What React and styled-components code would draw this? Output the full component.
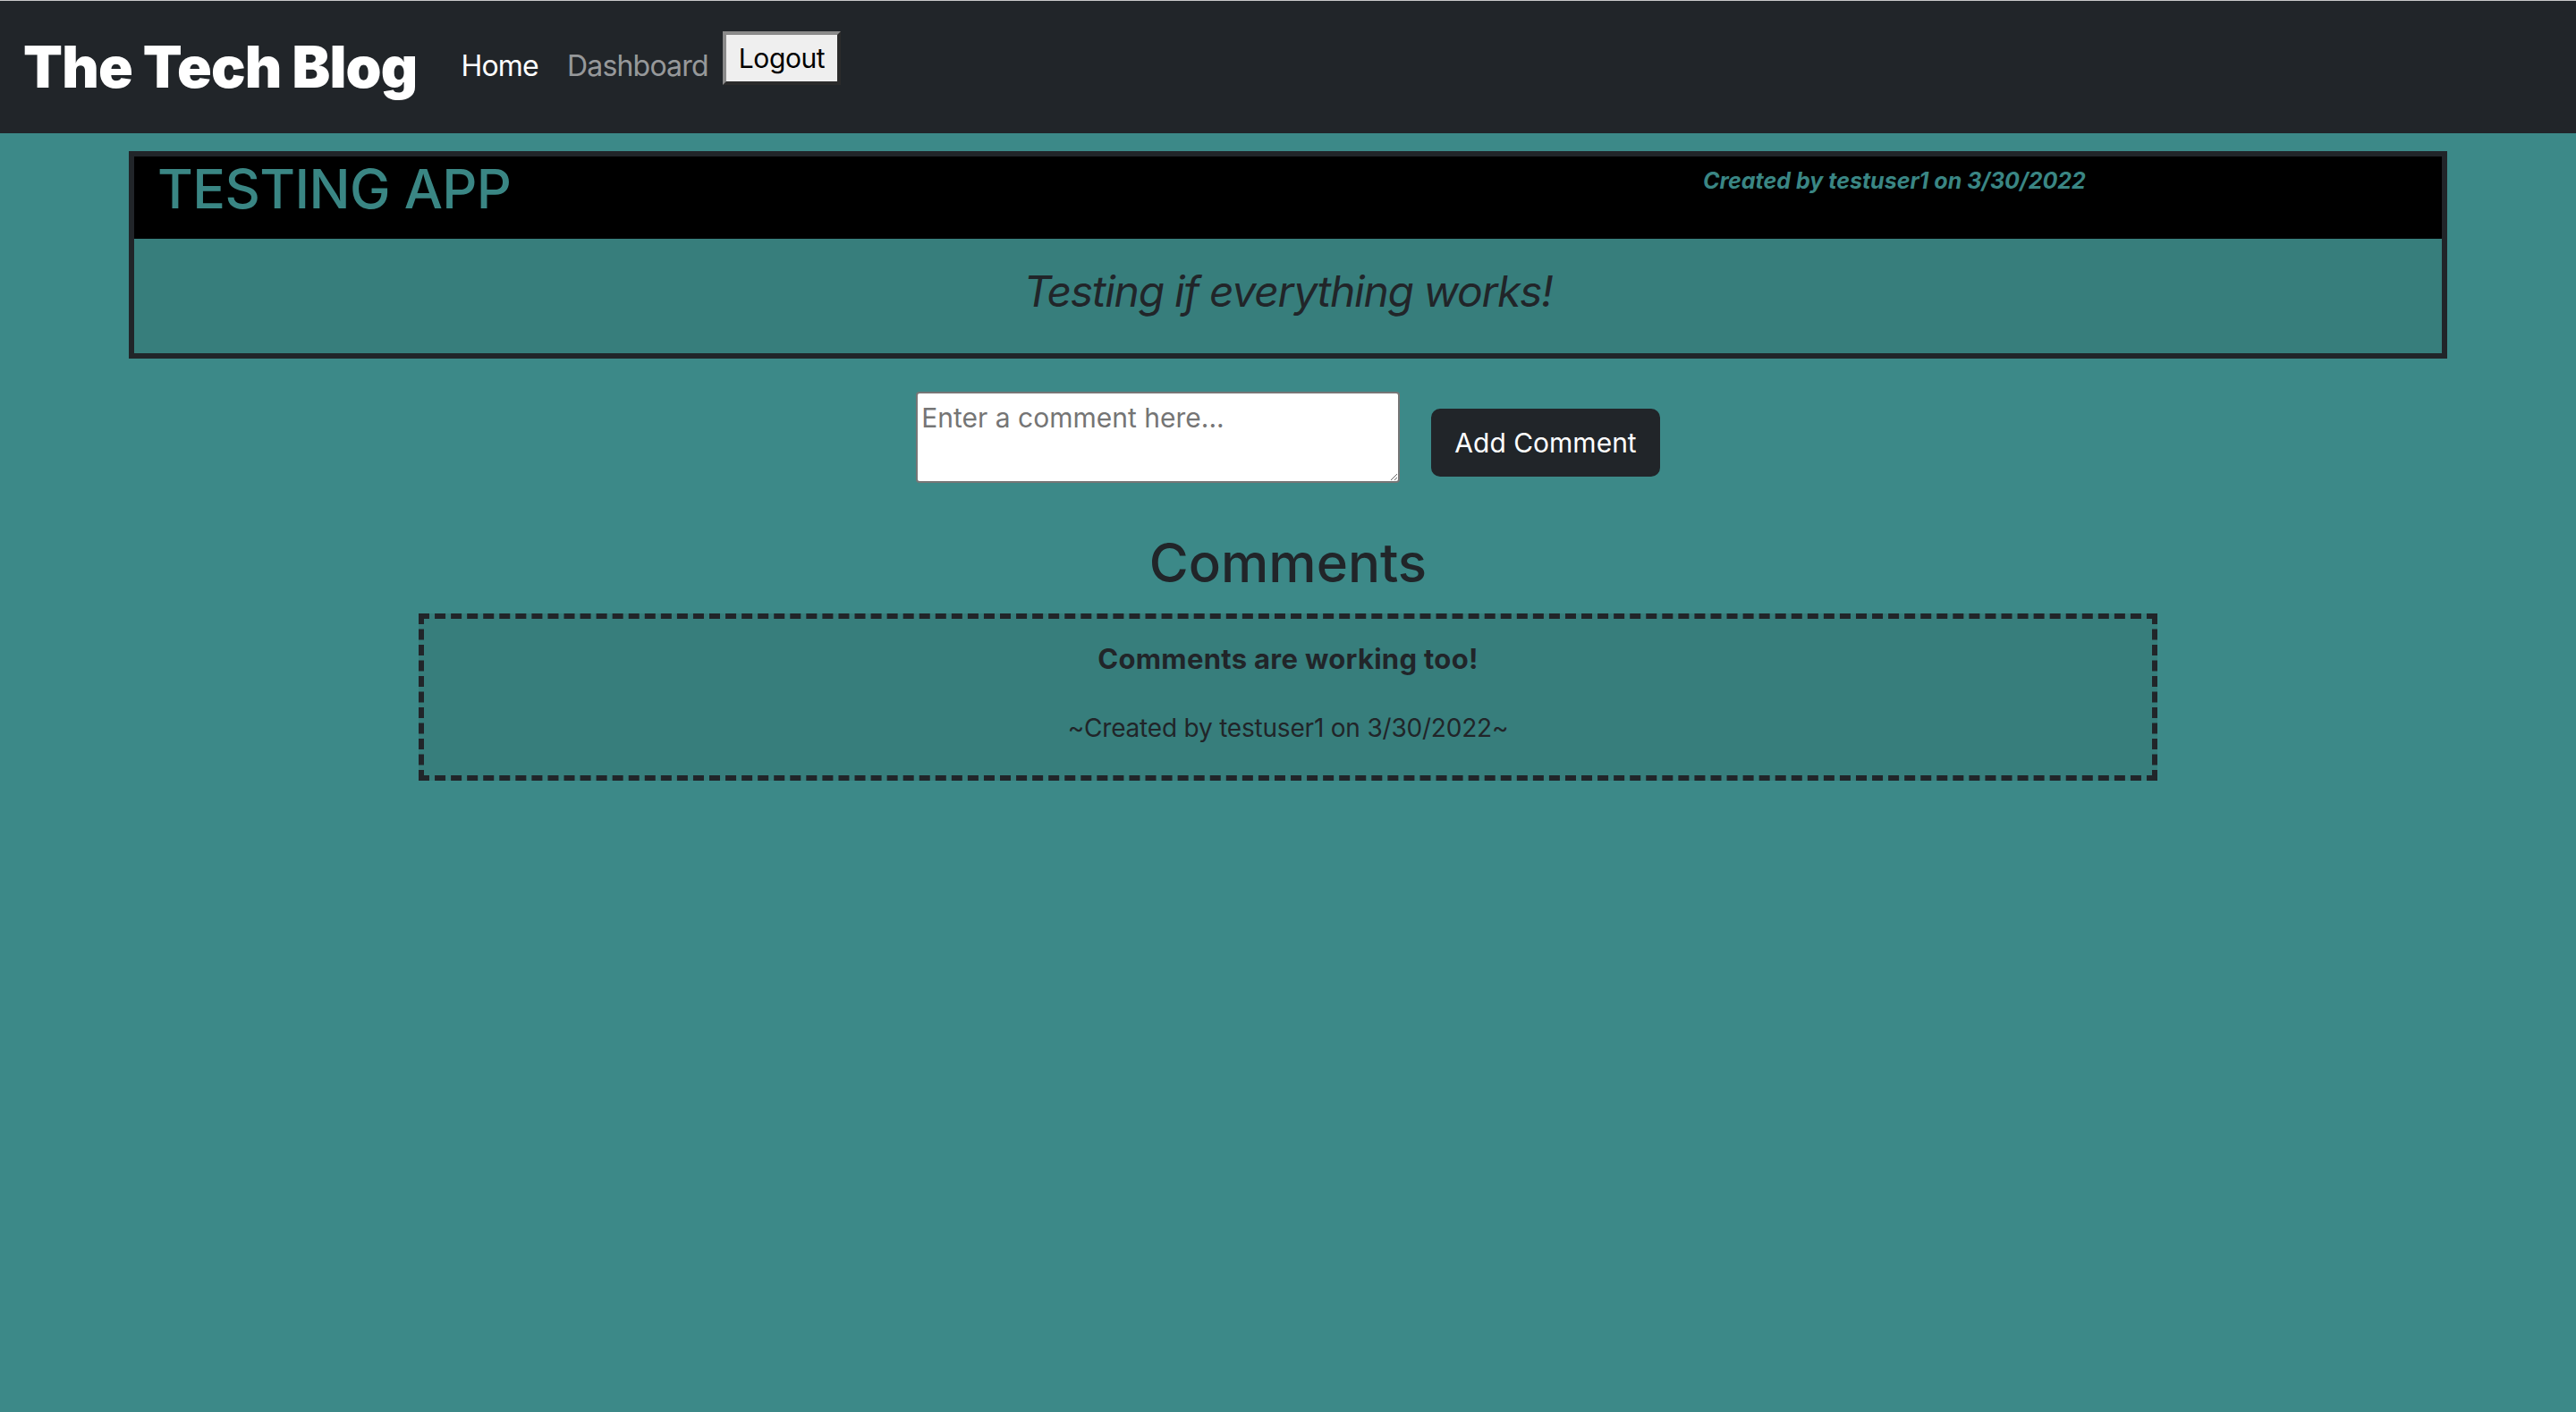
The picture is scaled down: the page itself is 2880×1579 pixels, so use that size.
import React from "react";
import styled, { createGlobalStyle } from "styled-components";

const teal = "#3c8988";
const tealDark = "#377e7c";
const dark = "#212529";

const GlobalStyle = createGlobalStyle`
  html, body {
    margin: 0;
    padding: 0;
    background: ${teal};
    min-height: 100%;
  }

  body {
    font-family: Inter, "Noto Sans", sans-serif;
    color: ${dark};
    min-height: 100vh;
  }

  * {
    box-sizing: border-box;
  }
`;

const Navbar = styled.header`
  display: flex;
  align-items: flex-start;
  height: 149px;
  padding: 34px 26px 0;
  background: ${dark};
  border-top: 1px solid #c9c9c9;
`;

const Brand = styled.a`
  margin: 2px 33px 0 0;
  font-size: 64px;
  font-weight: 900;
  line-height: 1.2;
  letter-spacing: -0.8px;
  color: #fff;
  text-decoration: none;
`;

const NavLink = styled.a`
  margin-top: 15px;
  padding: 0 16px;
  font-size: 32px;
  line-height: 48px;
  letter-spacing: -0.8px;
  color: ${(p) => (p.$active ? "#fff" : "rgba(255, 255, 255, 0.55)")};
  text-decoration: none;
`;

const LogoutButton = styled.button`
  height: 60px;
  padding: 0 14px;
  font-family: Inter, "Noto Sans", sans-serif;
  font-size: 30px;
  letter-spacing: -0.4px;
  color: #000;
  background: #efefef;
  border-width: 4px;
  border-style: solid;
  border-color: #8a8a8a #2b2b2b #2b2b2b #8a8a8a;
  cursor: pointer;
`;

const Main = styled.main`
  display: flex;
  flex-direction: column;
  align-items: center;
`;

const PostCard = styled.article`
  width: 90%;
  margin-top: 20px;
  border: 6px solid ${dark};
`;

const PostHeader = styled.div`
  display: grid;
  grid-template-columns: 1fr 826px;
  height: 92px;
  padding-left: 26px;
  background: #000;
`;

const PostTitle = styled.h2`
  margin: 0;
  font-size: 61px;
  font-weight: 500;
  line-height: 1.2;
  letter-spacing: -0.6px;
  color: #3a8684;
`;

const PostMeta = styled.p`
  margin: 12px 0 0;
  font-size: 25px;
  font-weight: 700;
  font-style: italic;
  line-height: 1.2;
  color: #3a8684;
`;

const PostBody = styled.div`
  height: 128px;
  padding-top: 30px;
  background: ${tealDark};
  text-align: center;
`;

const PostText = styled.p`
  margin: 0;
  font-size: 48px;
  font-style: italic;
  line-height: 1.2;
  letter-spacing: -1.3px;
  color: ${dark};
`;

const CommentForm = styled.form`
  display: flex;
  align-items: flex-start;
  gap: 35px;
  margin-top: 37px;
`;

const CommentInput = styled.textarea`
  width: 541px;
  height: 102px;
  padding: 9px 4px 4px;
  font-family: Inter, "Noto Sans", sans-serif;
  font-size: 30px;
  color: #000;
  background: #fff;
  border: 2px solid #767676;
  border-radius: 4px;

  &::placeholder {
    color: #757575;
  }
`;

const SubmitButton = styled.button`
  margin-top: 19px;
  padding: 12px 24px;
  font-family: Inter, "Noto Sans", sans-serif;
  font-size: 30px;
  line-height: 48px;
  color: #fff;
  background: ${dark};
  border: 2px solid ${dark};
  border-radius: 10px;
  cursor: pointer;
`;

const SectionTitle = styled.h2`
  margin: 53px 0 0;
  font-size: 60px;
  font-weight: 500;
  line-height: 1.2;
  color: ${dark};
`;

const CommentCard = styled.div`
  width: 67.5%;
  margin-top: 21px;
  padding: 26px 0 35px;
  background: ${tealDark};
  border: 6px dashed ${dark};
  text-align: center;
`;

const CommentText = styled.p`
  margin: 0;
  font-size: 31px;
  font-weight: 700;
  line-height: 1.2;
  letter-spacing: 0.3px;
`;

const CommentMeta = styled.p`
  margin: 43px 0 0;
  font-size: 28px;
  line-height: 1.2;
  letter-spacing: -0.2px;
`;

const comments = [
  { text: "Comments are working too!", user: "testuser1", date: "3/30/2022" },
];

export default function App() {
  return (
    <>
      <GlobalStyle />
      <Navbar>
        <Brand href="#">The Tech Blog</Brand>
        <NavLink href="#" $active>
          Home
        </NavLink>
        <NavLink href="#">Dashboard</NavLink>
        <LogoutButton type="button">Logout</LogoutButton>
      </Navbar>
      <Main>
        <PostCard>
          <PostHeader>
            <PostTitle>TESTING APP</PostTitle>
            <PostMeta>Created by testuser1 on 3/30/2022</PostMeta>
          </PostHeader>
          <PostBody>
            <PostText>Testing if everything works!</PostText>
          </PostBody>
        </PostCard>

        <CommentForm onSubmit={(e) => e.preventDefault()}>
          <CommentInput placeholder="Enter a comment here..." />
          <SubmitButton type="submit">Add Comment</SubmitButton>
        </CommentForm>

        <SectionTitle>Comments</SectionTitle>
        {comments.map((c, i) => (
          <CommentCard key={i}>
            <CommentText>{c.text}</CommentText>
            <CommentMeta>
              ~Created by {c.user} on {c.date}~
            </CommentMeta>
          </CommentCard>
        ))}
      </Main>
    </>
  );
}
